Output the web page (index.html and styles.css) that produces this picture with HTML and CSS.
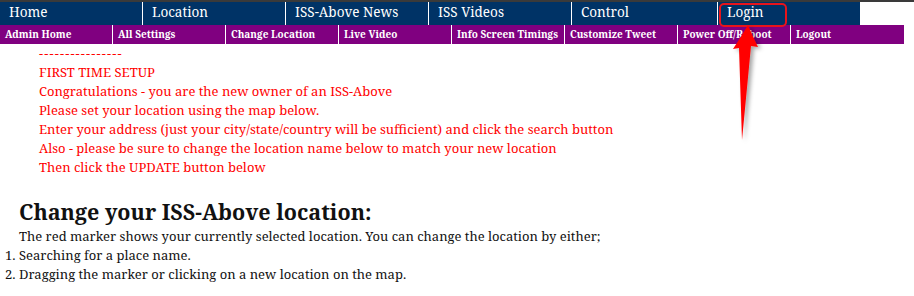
FILE: index.html
```
<!DOCTYPE html>
<html lang="en">
  <head>
    <meta charset="UTF-8" />
    <title>ISS-Above Location</title>
    <link rel="stylesheet" href="styles.css">
  </head>
  <body>
    <ul class="topnav">
      <li><a href="#">Home</a></li>
      <li><a href="#">Location</a></li>
      <li><a href="#">ISS-Above News</a></li>
      <li><a href="#">ISS Videos</a></li>
      <li class="control"><a href="#">Control</a></li>
      <li class="login"><a href="#">Login</a></li>
    </ul>
    <ul class="subnav">
      <li><a href="#">Admin Home</a></li>
      <li><a href="#">All Settings</a></li>
      <li><a href="#">Change Location</a></li>
      <li><a href="#">Live Video</a></li>
      <li><a href="#">Info Screen Timings</a></li>
      <li><a href="#">Customize Tweet</a></li>
      <li><a href="#">Power Off/Reboot</a></li>
      <li><a href="#">Logout</a></li>
    </ul>

    <div class="setup">
      <span class="rule">----------------</span><br>
      FIRST TIME SETUP<br>
      Congratulations - you are the new owner of an ISS-Above<br>
      Please set your location using the map below.<br>
      Enter your address (just your city/state/country will be sufficient) and click the search button<br>
      Also - please be sure to change the location name below to match your new location<br>
      Then click the UPDATE button below
    </div>

    <div class="content">
      <h2>Change your ISS-Above location:</h2>
      <p>The red marker shows your currently selected location. You can change the location by either;</p>
      <ol>
        <li>Searching for a place name.</li>
        <li>Dragging the marker or clicking on a new location on the map.</li>
      </ol>
    </div>

    <!-- annotation drawn over the screenshot -->
    <div class="mark-box"></div>
    <svg class="mark-arrow" width="60" height="130" viewBox="0 0 60 130">
      <defs>
        <filter id="shade" x="-50%" y="-20%" width="200%" height="140%">
          <feDropShadow dx="3" dy="2" stdDeviation="2" flood-color="#000" flood-opacity="0.35" />
        </filter>
      </defs>
      <path d="M28 3 Q32 13 38 25 L31 24 L22 118 L19 26 L13 27 Q21 15 28 3 Z" fill="#ff0000" filter="url(#shade)" />
    </svg>
  </body>
</html>
```
FILE: styles.css
```
body {
  margin: 0;
  padding: 0;
  border-top: 2px solid #3a3a3a;
  font-family: "Noto Serif", Georgia, serif;
  font-size: 13px;
  background-color: #fff;
  position: relative;
}

.topnav,
.subnav {
  list-style: none;
  margin: 0;
  padding: 0;
  display: flex;
}

.topnav {
  width: 860px;
  height: 23px;
  background-color: #003366;
}

.topnav li {
  width: 142px;
  border-right: 1px solid #fff;
}

.topnav li.control {
  width: 145px;
}

.topnav li.login {
  width: auto;
  flex: 1;
  border-right: none;
}

.topnav a {
  display: block;
  padding-left: 9px;
  line-height: 20px;
  font-size: 13.5px;
  color: #fff;
  text-decoration: none;
}

.subnav {
  width: 904px;
  height: 19px;
  background-color: #800080;
}

.subnav li {
  width: 112px;
  border-right: 1px solid #fff;
}

.subnav li:last-child {
  border-right: none;
  flex: 1;
}

.subnav a {
  display: block;
  padding-left: 5px;
  line-height: 18px;
  font-size: 10px;
  font-weight: bold;
  color: #fff;
  text-decoration: none;
}

.setup {
  padding-left: 39px;
  line-height: 19px;
  color: #ff0000;
}

.setup .rule {
  letter-spacing: 1.2px;
}

.content {
  padding-left: 19px;
}

.content h2 {
  margin: 22px 0 2px;
  font-size: 21.5px;
  line-height: 26px;
  color: #111;
}

.content p {
  margin: 0;
  line-height: 19px;
  color: #111;
}

.content ol {
  margin: 0;
  padding-left: 0;
  line-height: 19px;
  color: #111;
}

.mark-box {
  position: absolute;
  left: 719px;
  top: 1px;
  width: 64px;
  height: 20px;
  border: 2px solid #e8141b;
  border-radius: 5px;
}

.mark-arrow {
  position: absolute;
  left: 720px;
  top: 20px;
}
```
